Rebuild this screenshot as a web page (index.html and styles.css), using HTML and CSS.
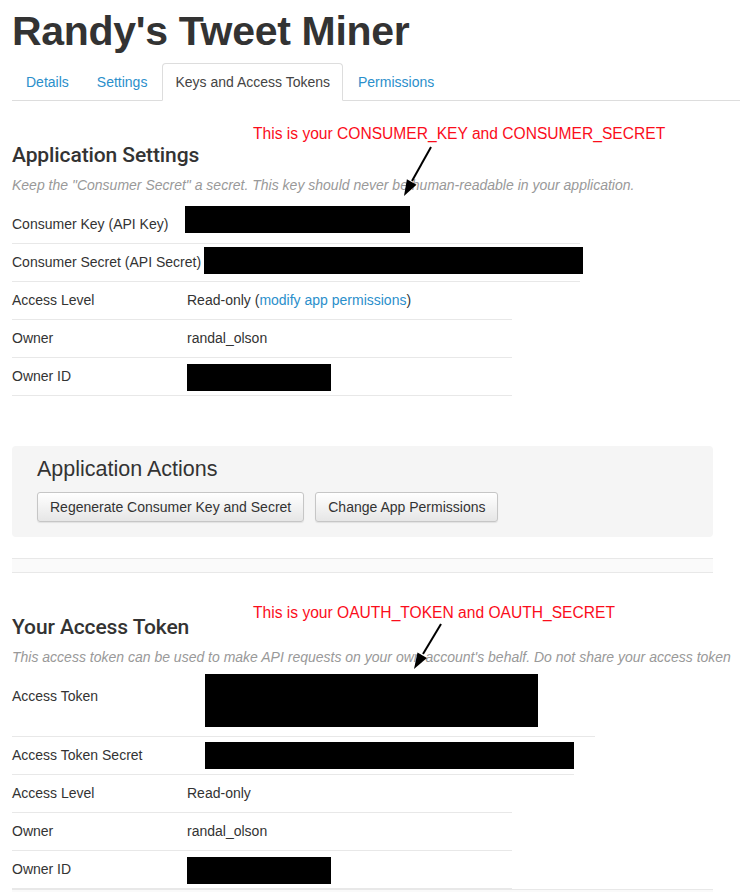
FILE: index.html
```html
<!DOCTYPE html>
<html lang="en">
<head>
<meta charset="utf-8">
<title>Randy's Tweet Miner</title>
<link rel="stylesheet" href="styles.css">
</head>
<body>
<div class="page">
  <h1 class="title">Randy's Tweet Miner</h1>
  <ul class="tabs">
    <li class="tab"><a class="tab-link" href="#">Details</a></li>
    <li class="tab"><a class="tab-link" href="#">Settings</a></li>
    <li class="tab"><a class="tab-link is-active" href="#">Keys and Access Tokens</a></li>
    <li class="tab"><a class="tab-link" href="#">Permissions</a></li>
  </ul>

  <section class="section">
    <h2 class="sec-title">Application Settings</h2>
    <p class="sec-desc">Keep the "Consumer Secret" a secret. This key should never be human-readable in your application.</p>
    <div class="row w-568">
      <div class="label">Consumer Key (API Key)</div>
      <div class="value"><span class="redact rd-ck"></span></div>
    </div>
    <div class="row w-568">
      <div class="label">Consumer Secret (API Secret)</div>
      <div class="value"><span class="redact rd-cs"></span></div>
    </div>
    <div class="row w-500">
      <div class="label">Access Level</div>
      <div class="value">Read-only (<a class="link" href="#">modify app permissions</a>)</div>
    </div>
    <div class="row w-500">
      <div class="label">Owner</div>
      <div class="value">randal_olson</div>
    </div>
    <div class="row w-500">
      <div class="label">Owner ID</div>
      <div class="value"><span class="redact rd-oid"></span></div>
    </div>
  </section>

  <div class="actions">
    <h3 class="actions-title">Application Actions</h3>
    <div class="actions-buttons">
      <button class="btn" type="button">Regenerate Consumer Key and Secret</button>
      <button class="btn" type="button">Change App Permissions</button>
    </div>
  </div>

  <div class="band"></div>

  <section class="section">
    <h2 class="sec-title">Your Access Token</h2>
    <p class="sec-desc">This access token can be used to make API requests on your own account's behalf. Do not share your access token</p>
    <div class="row w-583">
      <div class="label">Access Token</div>
      <div class="value"><span class="redact rd-at"></span></div>
    </div>
    <div class="row w-562">
      <div class="label">Access Token Secret</div>
      <div class="value"><span class="redact rd-ats"></span></div>
    </div>
    <div class="row w-500">
      <div class="label">Access Level</div>
      <div class="value">Read-only</div>
    </div>
    <div class="row w-500">
      <div class="label">Owner</div>
      <div class="value">randal_olson</div>
    </div>
    <div class="row w-500">
      <div class="label">Owner ID</div>
      <div class="value"><span class="redact rd-oid"></span></div>
    </div>
  </section>

  <div class="band band-end"></div>

  <div class="annot annot-1">This is your CONSUMER_KEY and CONSUMER_SECRET</div>
  <div class="annot annot-2">This is your OAUTH_TOKEN and OAUTH_SECRET</div>

  <svg class="arrows" width="740" height="892" viewBox="0 0 740 892">
    <line x1="431" y1="147" x2="412" y2="181" stroke="#000" stroke-width="2"/>
    <polygon points="404,196 416.5,184.7 406.9,179.3" fill="#000"/>
    <line x1="441" y1="624" x2="423" y2="654" stroke="#000" stroke-width="2"/>
    <polygon points="414,669 426.9,658.1 417.5,652.5" fill="#000"/>
  </svg>
</div>
</body>
</html>
```

FILE: styles.css
```css
html, body {
  margin: 0;
  padding: 0;
  background: #fff;
  overflow: hidden;
}

.page {
  position: relative;
  width: 740px;
  height: 892px;
  box-sizing: border-box;
  padding-left: 12px;
  overflow: hidden;
  font-family: "Liberation Sans", Arial, sans-serif;
  font-size: 14px;
  color: #333;
}

.title {
  margin: 6px 0 0;
  font-family: "Liberation Sans", Arial, sans-serif;
  font-weight: bold;
  font-size: 41px;
  line-height: 50px;
  letter-spacing: -0.3px;
  color: #333;
}

.tabs {
  display: flex;
  list-style: none;
  margin: 7px 0 0;
  padding: 0 0 0 1px;
  border-bottom: 1px solid #ddd;
}

.tab {
  margin-right: 2px;
  margin-bottom: -1px;
}

.tab-link {
  display: block;
  padding: 0 12px;
  line-height: 36px;
  border: 1px solid transparent;
  border-radius: 4px 4px 0 0;
  color: #2b8fcb;
  text-decoration: none;
  font-size: 14px;
}

.tab-link.is-active {
  color: #444;
  background: #fff;
  border-color: #ddd #ddd transparent;
}

.section {
  padding-top: 39px;
}

.sec-title {
  margin: 0;
  font-family: Roboto, "Liberation Sans", sans-serif;
  font-weight: 500;
  font-size: 21px;
  line-height: 30px;
  letter-spacing: -0.1px;
  color: #333;
}

.sec-desc {
  margin: 5px 0 11px;
  font-style: italic;
  font-size: 14px;
  line-height: 20px;
  color: #999;
  white-space: nowrap;
}

.row {
  display: flex;
  align-items: flex-start;
  border-bottom: 1px solid #e8e8e8;
  line-height: 37px;
  font-size: 14px;
  color: #333;
}

.w-568 { width: 568px; }
.w-500 { width: 500px; }
.w-583 { width: 583px; }
.w-562 { width: 562px; }

.label {
  flex: 0 0 175px;
  min-width: 0;
  white-space: nowrap;
}

.value {
  white-space: nowrap;
}

.link {
  color: #2b8fcb;
  text-decoration: none;
}

.redact {
  display: block;
  background: #000;
  height: 27px;
}

.rd-ck { width: 225px; margin-left: -2px; margin-top: 0; }
.rd-cs { width: 379px; margin-left: 17px; margin-top: 3px; }
.rd-oid { width: 144px; margin-top: 6px; }
.rd-at { width: 333px; height: 53px; margin-left: 18px; margin-top: -4px; margin-bottom: 9px; }
.rd-ats { width: 369px; margin-left: 18px; margin-top: 5px; }

.actions {
  width: 701px;
  box-sizing: border-box;
  margin-top: 50px;
  padding: 10px 25px 15px;
  background: #f5f5f5;
  border-radius: 4px;
}

.actions-title {
  margin: 0;
  font-weight: normal;
  font-size: 21.5px;
  line-height: 26px;
  color: #333;
}

.actions-buttons {
  display: flex;
  gap: 11px;
  margin-top: 10px;
}

.btn {
  height: 30px;
  padding: 0 12px;
  border: 1px solid #c6c6c6;
  border-radius: 3px;
  background: linear-gradient(#ffffff, #e6e6e6);
  box-shadow: 0 1px 1px rgba(0, 0, 0, 0.08);
  font-family: "Liberation Sans", Arial, sans-serif;
  font-size: 14px;
  color: #333;
}

.band {
  width: 701px;
  height: 13px;
  margin-top: 21px;
  border-top: 1px solid #e8e8e8;
  border-bottom: 1px solid #e8e8e8;
  background: #fafafa;
}

.band-end {
  margin-top: 0;
}

.annot {
  position: absolute;
  left: 253px;
  font-family: "Liberation Sans", Arial, sans-serif;
  font-size: 15.6px;
  line-height: 16px;
  color: #fb0d1b;
  white-space: nowrap;
}

.annot-1 { top: 126px; }
.annot-2 { top: 605px; }

.arrows {
  position: absolute;
  left: 0;
  top: 0;
  pointer-events: none;
}
```
